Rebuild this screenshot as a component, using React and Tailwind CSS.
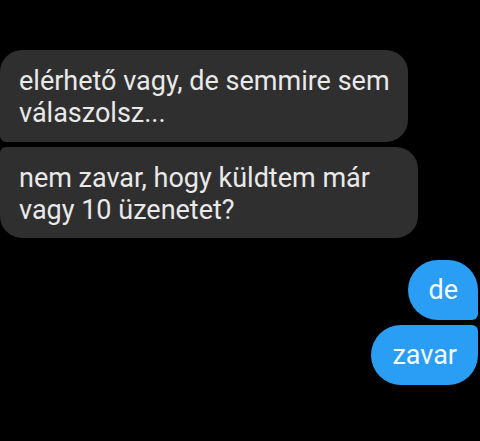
export default function App() {
  return (
    <div className="w-[480px] h-[441px] bg-black overflow-hidden font-['Roboto',sans-serif] text-[27px] leading-[32px] text-[#e9e9e9]">
      <div className="flex flex-col pt-[50px]">
        <div className="w-[408px] rounded-[22px] rounded-bl-[6px] bg-[#2f2f2f] pl-[19px] pr-4 pt-[15px] pb-[13px]">
          elérhető vagy, de semmire sem
          <br />
          válaszolsz...
        </div>
        <div className="mt-[5px] w-[418px] rounded-[22px] rounded-tl-[6px] bg-[#2f2f2f] pl-[19px] pr-4 pt-[15px] pb-[12px]">
          nem zavar, hogy küldtem már
          <br />
          vagy 10 üzenetet?
        </div>
        <div className="mt-[22px] flex flex-col items-end pr-[2px]">
          <div className="rounded-[30px] rounded-br-[6px] bg-[#2a9df4] px-[20px] pt-[14px] pb-[14px] text-[#f4f9ff]">
            de
          </div>
          <div className="mt-[5px] rounded-[30px] rounded-tr-[6px] bg-[#2a9df4] px-[21px] pt-[14px] pb-[14px] text-[#f4f9ff]">
            zavar
          </div>
        </div>
      </div>
    </div>
  );
}
